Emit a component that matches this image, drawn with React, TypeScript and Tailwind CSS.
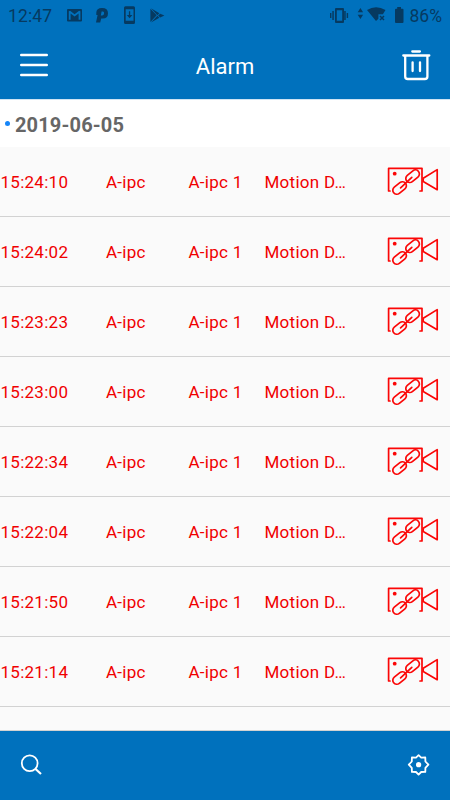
import React from "react";

const times = ["15:24:10", "15:24:02", "15:23:23", "15:23:00", "15:22:34", "15:22:04", "15:21:50", "15:21:14"];

function CameraLink() {
  return (
    <svg className="-mt-[6px] block h-8 w-[52px]" viewBox="0 0 52 32" fill="none" stroke="#fb0606" strokeWidth="1.7" strokeLinejoin="round" strokeLinecap="round">
      <path d="M3 27H1.6V4.3H35V27H33" />
      <path d="M36.2 14.3 50.2 5.6V25.7L36.2 17.6Z" />
      <circle cx="7.7" cy="9.7" r="1.9" fill="#fb0606" stroke="none" />
      <rect x="-7.6" y="-4" width="15.2" height="8" rx="4" transform="translate(25.6 12.2) rotate(-39)" />
      <rect x="-7.6" y="-4" width="15.2" height="8" rx="4" transform="translate(12.6 24) rotate(-39)" />
      <path d="M13.6 23.8 24.8 13.3" />
    </svg>
  );
}

function StatusBar() {
  return (
    <div className="flex h-8 items-center pl-2 pr-2 text-[#063a61]">
      <span className="w-[59px] whitespace-nowrap text-[17.5px] leading-8 tracking-[0.15px]">12:47</span>
      <svg className="h-8 w-[110px]" viewBox="67 0 110 32" fill="currentColor">
        <path fillRule="evenodd" d="M68 9h13a1 1 0 0 1 1 1v10.5a1 1 0 0 1-1 1H68a1 1 0 0 1-1-1V10a1 1 0 0 1 1-1Zm.8 2.3v8.4h1.8V13.4l4 3.2 4-3.2v6.3h1.8v-8.4l-1.3-.6-4.5 3.5-4.5-3.5Z" />
        <path fillRule="evenodd" d="M96.3 15V12.7q0-4.7 5.7-4.7 6 0 6 5.3 0 5.3-5.3 5.3h-1.5l-1 4H96l1.6-7.6Zm5.3-3.4-.8 4h1.4q1.6 0 1.9-2.1.2-1.9-1.2-1.9Z" />
        <path fillRule="evenodd" d="M125.5 6.3h8q1.5 0 1.5 1.5v14.7q0 1.5-1.5 1.5h-8q-1.5 0-1.5-1.5V7.8q0-1.5 1.5-1.5Zm.2 3v11.5h7.8V9.3Z" />
        <path d="M128.9 11.3h1.3V15h2.2l-2.8 3.2-2.8-3.2h2.1Z" />
        <path d="m151 8.2 8.4 5.1-2 1.9Zm-.6.6 6.3 6.5-6.3 6.6Zm9.8 5 4.2 1.6-4.2 2-2.1-2Zm-2.8 2 2 1.9-8.4 4.8Z" />
      </svg>
      <svg className="ml-auto h-8 w-[76px]" viewBox="329 0 76 32" fill="currentColor">
        <path d="M330 13h1.4v5H330Zm2.3-2h1.5v9h-1.5Zm11.9 0h1.5v9h-1.5Zm2.5 2h1.4v5h-1.4Z" />
        <path fillRule="evenodd" d="M336 8h7q1 0 1 1v13q0 1-1 1h-7q-1 0-1-1V9q0-1 1-1Zm.8 2.2v10.5h5.4V10.2Z" />
        <path d="m360.4 8 2.7 4.3h-5.4Zm0 11-2.7-4.3h5.4Z" />
        <path d="M367 10q9-5.5 18.5 0l-2.6 4.3h-4.5v4.5L376 21Z" />
        <path d="m380 16 4 4m0-4-4 4" fill="none" stroke="currentColor" strokeWidth="1.5" />
        <path d="M396 8.7h1.2V7h3.8v1.7h1.5q1 0 1 1V22q0 1-1 1h-6.5q-1 0-1-1V9.7q0-1 1-1Z" />
      </svg>
      <span className="ml-[5px] text-[17.5px] leading-8">86%</span>
    </div>
  );
}

export default function App() {
  return (
    <main className="flex h-[800px] w-[450px] flex-col overflow-hidden bg-[#fafafa] font-['Roboto',sans-serif]">
      <header className="h-[99px] shrink-0 bg-[#0071bd]">
        <StatusBar />
        <div className="grid h-[67px] grid-cols-[90px_1fr_90px] items-center">
          <button aria-label="Menu" className="-mt-px ml-5">
            <svg className="block h-6 w-7" viewBox="0 0 28 24" stroke="white" strokeWidth="2.4" strokeLinecap="round">
              <path d="M1.2 2h25.6M1.2 12h25.6M1.2 22h25.6" />
            </svg>
          </button>
          <h1 className="pt-px text-center text-[22px] text-white">Alarm</h1>
          <button aria-label="Delete" className="ml-[42px] w-7">
            <svg className="block h-8 w-[30px]" viewBox="0 0 30 32" fill="none" stroke="white" strokeWidth="2.3" strokeLinejoin="round" strokeLinecap="round">
              <path d="M10.3 1.5h7.6M1.3 5.5h26M3.2 6v20.4q0 2.6 2.6 2.6h17q2.6 0 2.6-2.6V6M10.6 12.3v8.7M18 12.3v8.7" />
            </svg>
          </button>
        </div>
      </header>
      <div className="flex h-12 shrink-0 items-center border-t border-[#cfe3f3] bg-white pl-[5px]">
        <span className="h-[5px] w-[5px] rounded-full bg-[#1685f8]" />
        <h2 className="ml-[5px] pt-[2px] text-[20px] font-bold leading-6 tracking-[0.15px] text-[#666]">2019-06-05</h2>
      </div>
      <section className="min-h-0 flex-1 overflow-hidden border-b border-[#d2d2d2]">
        {times.map((time) => (
          <div key={time} className="grid h-[70px] grid-cols-[106px_82.5px_76px_122.5px_52px] items-center border-b border-[#d2d2d2] pt-[2px] text-[17px] tracking-[0.27px] text-[#f00000]">
            <span className="pl-[0.5px]">{time}</span>
            <span>A-ipc</span>
            <span className="whitespace-nowrap">A-ipc 1</span>
            <span>Motion D…</span>
            <CameraLink />
          </div>
        ))}
      </section>
      <footer className="flex h-[69px] shrink-0 items-center justify-between bg-[#0071bd] pb-[2px] pl-5 pr-[19px]">
        <svg aria-label="Search" className="h-6 w-6" viewBox="0 0 24 24" fill="none" stroke="white" strokeWidth="1.8">
          <circle cx="9.7" cy="10.2" r="7.9" />
          <path d="m15.3 15.7 5.7 5.3" strokeWidth="2.2" />
        </svg>
        <svg aria-label="Settings" className="h-6 w-6" viewBox="0 0 24 24" fill="none" stroke="white" strokeWidth="1.8" strokeLinejoin="round">
          <path d="m11.6 2.2 2.6 2.4 4.1-.1.1 4 3 3.2-3 3.2-.1 4-4.1.1-2.6 2.6L9 19l-4.1-.1-.1-4-3-3.2 3-3.2.1-4L9 4.6Z" />
          <circle cx="11.6" cy="11.7" r="2.6" fill="white" stroke="none" />
        </svg>
      </footer>
    </main>
  );
}
